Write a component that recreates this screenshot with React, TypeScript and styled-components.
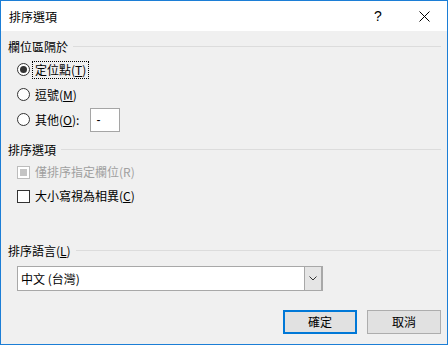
import React from "react";
import styled, { createGlobalStyle } from "styled-components";

const Global = createGlobalStyle`
  html, body { margin: 0; padding: 0; background: #f0f0f0; }
  body { font-family: "Noto Sans CJK TC", "Noto Sans", sans-serif; font-size: 12px; color: #000; }
  * { box-sizing: border-box; }
`;

const Window = styled.div`
  width: 448px;
  height: 345px;
  border: 1px solid #1c7ed6;
  background: #f0f0f0;
  display: flex;
  flex-direction: column;
`;

const TitleBar = styled.div`
  height: 30px;
  background: #fff;
  display: flex;
  align-items: center;
  padding-left: 8px;
  flex-shrink: 0;
`;

const Title = styled.div`
  flex: 1;
  font-size: 12px;
  line-height: 14px;
  margin-top: 1px;
`;

const TitleButton = styled.div`
  width: 46px;
  height: 30px;
  display: flex;
  align-items: center;
  justify-content: center;
  font-family: "Liberation Sans", sans-serif;
  font-size: 14px;
  color: #000;
`;

const Content = styled.div`
  flex: 1;
  display: flex;
  flex-direction: column;
  padding: 0 6px 0 7px;
`;

const GroupHeader = styled.div<{ $mt: number }>`
  display: flex;
  align-items: center;
  height: 14px;
  margin-top: ${(p) => p.$mt}px;
  line-height: 14px;
`;

const HeaderLine = styled.div`
  flex: 1;
  height: 1px;
  background: #dcdcdc;
  margin-left: 5px;
  margin-top: -2px;
`;

const OptionRow = styled.div<{ $h: number }>`
  display: flex;
  align-items: center;
  height: ${(p) => p.$h}px;
  padding-left: 9px;
  line-height: 14px;
`;

const RadioCircle = styled.div<{ $checked?: boolean }>`
  width: 13px;
  height: 13px;
  border-radius: 50%;
  border: 1px solid #333;
  background: #fff;
  display: flex;
  align-items: center;
  justify-content: center;
  flex-shrink: 0;
  &::after {
    content: "";
    display: ${(p) => (p.$checked ? "block" : "none")};
    width: 7px;
    height: 7px;
    border-radius: 50%;
    background: #333;
  }
`;

const CheckBox = styled.div<{ $disabled?: boolean }>`
  width: 13px;
  height: 13px;
  border: 1px solid ${(p) => (p.$disabled ? "#bcbcbc" : "#333")};
  background: #fff;
  display: flex;
  align-items: center;
  justify-content: center;
  flex-shrink: 0;
  &::after {
    content: "";
    display: ${(p) => (p.$disabled ? "block" : "none")};
    width: 7px;
    height: 7px;
    background: #c4c4c4;
  }
`;

const Label = styled.span<{ $focus?: boolean; $disabled?: boolean }>`
  margin-left: ${(p) => (p.$focus ? "2px" : "5px")};
  padding: 1px ${(p) => (p.$focus ? "2px" : "0")};
  border: ${(p) => (p.$focus ? "1px dotted #000" : "none")};
  color: ${(p) => (p.$disabled ? "#a0a0a0" : "#000")};
  white-space: nowrap;
  line-height: 14px;
`;

const U = styled.span`
  text-decoration: underline;
  text-underline-offset: 1px;
`;

const SmallInput = styled.div`
  width: 30px;
  height: 24px;
  margin-left: 11px;
  border: 1px solid #a5a5a5;
  background: #fff;
  display: flex;
  align-items: center;
  padding-left: 5px;
  font-family: "Liberation Sans", sans-serif;
`;

const Select = styled.div`
  margin-left: 9px;
  margin-top: 8px;
  width: 306px;
  height: 25px;
  border: 1px solid #a8a8a8;
  background: #fff;
  display: flex;
  align-items: stretch;
`;

const SelectText = styled.div`
  flex: 1;
  display: flex;
  align-items: center;
  padding-left: 3px;
  line-height: 14px;
`;

const SelectButton = styled.div`
  width: 18px;
  background: #e5e5e5;
  border-left: 1px solid #a8a8a8;
  border-right: 1px solid #a8a8a8;
  display: flex;
  align-items: center;
  justify-content: center;
`;

const ButtonRow = styled.div`
  display: flex;
  justify-content: flex-end;
  gap: 10px;
  margin-top: 19px;
`;

const Button = styled.div<{ $primary?: boolean }>`
  width: 74px;
  height: 24px;
  background: #e1e1e1;
  border: ${(p) => (p.$primary ? "2px solid #0078d7" : "1px solid #adadad")};
  display: flex;
  align-items: center;
  justify-content: center;
  line-height: 14px;
`;

export default function App() {
  return (
    <>
      <Global />
      <Window>
        <TitleBar>
          <Title>排序選項</Title>
          <TitleButton>?</TitleButton>
          <TitleButton>
            <svg width="11" height="11" viewBox="0 0 11 11">
              <path d="M0.5 0.5 L10.5 10.5 M10.5 0.5 L0.5 10.5" stroke="#000" strokeWidth="1" />
            </svg>
          </TitleButton>
        </TitleBar>
        <Content>
          <GroupHeader $mt={9}>
            <span>欄位區隔於</span>
            <HeaderLine />
          </GroupHeader>
          <OptionRow $h={25} style={{ marginTop: 3 }}>
            <RadioCircle $checked />
            <Label $focus>
              定位點(<U>T</U>)
            </Label>
          </OptionRow>
          <OptionRow $h={25}>
            <RadioCircle />
            <Label>
              逗號(<U>M</U>)
            </Label>
          </OptionRow>
          <OptionRow $h={25}>
            <RadioCircle />
            <Label>
              其他(<U>O</U>):
            </Label>
            <SmallInput>-</SmallInput>
          </OptionRow>
          <GroupHeader $mt={11}>
            <span>排序選項</span>
            <HeaderLine />
          </GroupHeader>
          <OptionRow $h={24} style={{ marginTop: 3 }}>
            <CheckBox $disabled />
            <Label $disabled>僅排序指定欄位(R)</Label>
          </OptionRow>
          <OptionRow $h={24}>
            <CheckBox />
            <Label>
              大小寫視為相異(<U>C</U>)
            </Label>
          </OptionRow>
          <GroupHeader $mt={36}>
            <span>
              排序語言(<U>L</U>)
            </span>
            <HeaderLine />
          </GroupHeader>
          <Select>
            <SelectText>中文 (台灣)</SelectText>
            <SelectButton>
              <svg width="8" height="5" viewBox="0 0 8 5">
                <path d="M0.5 0.5 L4 4 L7.5 0.5" stroke="#333" strokeWidth="1" fill="none" />
              </svg>
            </SelectButton>
          </Select>
          <ButtonRow>
            <Button $primary>確定</Button>
            <Button>取消</Button>
          </ButtonRow>
        </Content>
      </Window>
    </>
  );
}
